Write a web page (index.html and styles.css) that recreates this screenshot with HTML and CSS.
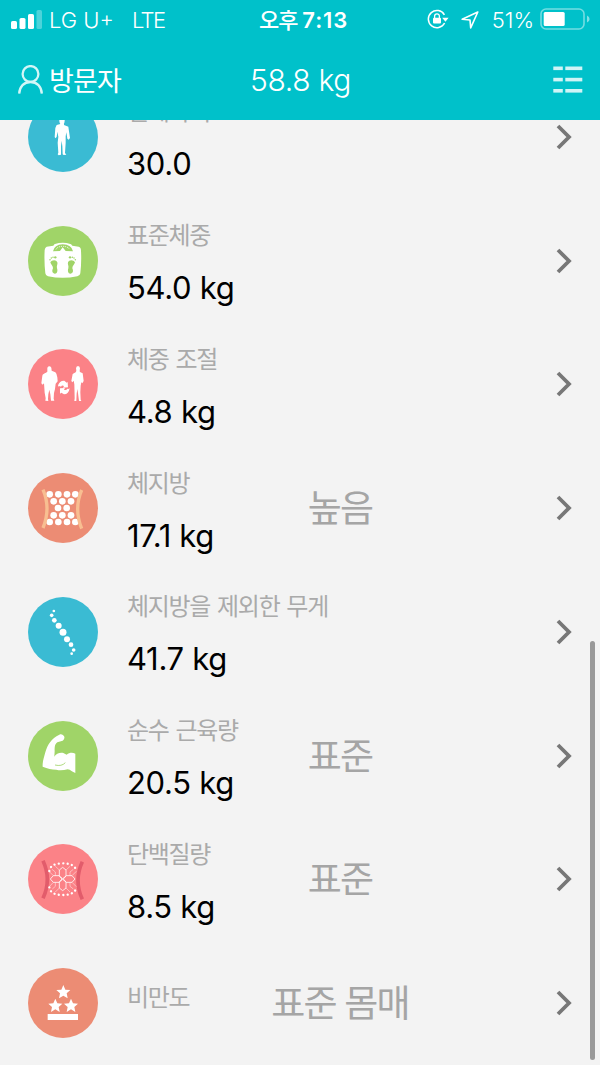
FILE: index.html
```
<!DOCTYPE html>
<html lang="ko">
<head>
    <meta charset="UTF-8">
    <meta name="viewport" content="width=device-width, initial-scale=1.0">
    <title>58.8 kg</title>
    <link rel="stylesheet" href="styles.css">
</head>
<body>

<div class="screen">

    <header class="header">
        <!-- Phone status bar -->
        <div class="status-bar">
            <div class="status-left">
                <svg class="signal" viewBox="0 0 32 20" width="32" height="20">
                    <rect x="0" y="12" width="6" height="8" rx="1.6"/>
                    <rect x="8.5" y="9" width="6" height="11" rx="1.6"/>
                    <rect x="17" y="5" width="6" height="15" rx="1.6"/>
                    <rect x="25.5" y="1" width="5.5" height="19" rx="1.6" opacity="0.3"/>
                </svg>
                <span class="carrier">LG U+</span>
                <span class="network">LTE</span>
            </div>
            <div class="time">오후 <span>7:13</span></div>
            <div class="status-right">
                <svg class="lock" viewBox="0 0 22 20" width="22" height="20" fill="none" stroke="#fff" stroke-width="1.5">
                    <path d="M17.4 5.8A8.6 8.6 0 1 0 17.6 14"/>
                    <path d="M15.2 8.7h6.4l-3.2 4z" fill="#fff" stroke="none"/>
                    <path d="M7.6 9V7.2a2.4 2.4 0 0 1 4.8 0V9" stroke-width="1.3"/>
                    <rect x="6" y="8.8" width="8" height="5.7" rx="1" fill="#fff" stroke="none"/>
                </svg>
                <svg class="location" viewBox="0 0 18 18" width="18" height="18" fill="none" stroke="#fff" stroke-width="1.6" stroke-linejoin="round">
                    <path d="M16.8 1L1.2 8.3l7.8.7.7 7.9z"/>
                </svg>
                <span class="percent">51%</span>
                <svg class="battery" viewBox="0 0 50 22" width="50" height="22">
                    <rect x="1" y="1" width="43" height="20" rx="5" fill="none" stroke="#fff" stroke-width="1.6" opacity="0.45"/>
                    <rect x="3.7" y="4" width="21" height="14" rx="1.5" fill="#fff"/>
                    <path d="M47 7.4q2.6 1 2.6 3.6t-2.6 3.6z" fill="#fff" opacity="0.5"/>
                </svg>
            </div>
        </div>

        <!-- Navigation -->
        <div class="nav-bar">
            <div class="user">
                <svg viewBox="0 0 26 29" width="26" height="29" fill="none" stroke="#d3f6f7" stroke-width="2.3">
                    <circle cx="12.5" cy="9" r="7.9"/>
                    <path d="M1.2 28.6C1.5 21.5 6 17 12.500 17s11 4.500 11.300 11.600"/>
                </svg>
                <span>방문자</span>
            </div>
            <h1>58.8 kg</h1>
            <svg class="menu" viewBox="0 0 30 28" width="30" height="28" fill="#d0f4f6">
                <rect x="0.3" y="0.5" width="9.5" height="3.6"/>
                <rect x="12.3" y="0.5" width="17" height="3.6"/>
                <rect x="0.3" y="11.8" width="9.5" height="3.6"/>
                <rect x="12.3" y="11.8" width="17" height="3.6"/>
                <rect x="0.3" y="23" width="9.5" height="3.6"/>
                <rect x="12.3" y="23" width="17" height="3.6"/>
            </svg>
        </div>
    </header>

    <!-- Measurements -->
    <main class="list-viewport">
        <ul class="list">
            <li class="row">
                <svg class="icon blue" viewBox="24 -40 210 210">
                    <ellipse cx="126" cy="16" rx="8" ry="11"/>
                    <path d="M121 24h11v5l13 5 5 34-4 5-4-3-3-19-2 12v20l-2 30 4 5-8 1-3-2-1-24-2-17-2 17v25l-7 2-3-3 2-5-2-30 2-18-3-15-2 16-4 4-2-4 2-27 4-9 11-3z"/>
                </svg>
                <div class="info"><p class="label">신체나이</p><p class="value">30.0</p></div>
                <p class="grade"></p>
                <svg class="arrow" viewBox="0 0 18 28"><path d="M3 3l11 11L3 25"/></svg>
            </li>
            <li class="row">
                <svg class="icon green" viewBox="24 32 210 210">
                    <path d="M80 94l20-3c2-2 2-4 5-5q23-8 46 0c4 1 4 4 6 5l19 3q7 2 7 12 2 35-2 68-1 8-9 9-44 9-88 0-7-1-8-9-4-35-2-70 1-8 6-10z"/>
                    <g fill="#a0d468">
                        <path d="M99 108q4-20 29-21 27 1 31 21l-22-1-9-11-8 11z"/>
                        <path d="M91 141c4-8 18-9 21 0 2 7-3 10-1 18 3 9 0 16-6 16-8 0-10-8-6-16 1-7-7-11-8-18z"/>
                        <path d="M165 141c-4-8-18-9-21 0-2 7 3 10 1 18-3 9 0 16 6 16 8 0 10-8 6-16-1-7 7-11 8-18z"/>
                        <circle cx="90" cy="133" r="2.3"/><circle cx="94" cy="128" r="2.3"/><circle cx="99" cy="126" r="2.3"/><circle cx="106" cy="126" r="3.5"/>
                        <circle cx="166" cy="133" r="2.3"/><circle cx="162" cy="128" r="2.3"/><circle cx="157" cy="126" r="2.3"/><circle cx="150" cy="126" r="3.5"/>
                    </g>
                    <path d="M108 102q5-9 20-9t21 9" fill="none" stroke="#fff" stroke-width="3" stroke-dasharray="3 3"/>
                </svg>
                <div class="info"><p class="label">표준체중</p><p class="value">54.0 kg</p></div>
                <p class="grade"></p>
                <svg class="arrow" viewBox="0 0 18 28"><path d="M3 3l11 11L3 25"/></svg>
            </li>
            <li class="row">
                <svg class="icon pink" viewBox="24 28 210 210">
                    <path d="M82 84q6-8 12 0l1 9 11 5c4 3 4 8 6 15l1 12-6 7-2 16-3 12-1 17 2 6h-10l-2-19-3-14-3 14-1 14 1 6-9-1 1-7-3-17-2-28-4 4-4-4 3-23c1-6 6-6 11-9l4-3z"/>
                    <ellipse cx="174" cy="87" rx="6" ry="8"/>
                    <path d="M170 92h8l2 5 8 4 3 23-4 7-3-3-2 10-1 20 1 22 2 4h-7l-3-23-2-13-2 14-1 22h-6l1-8-1-42-2-11-4 5-3-4 4-21 9-5z"/>
                    <path d="M114 137q5-15 19-14l7 6 3-2 1 16-15 1 3-5q-6-4-9 2l-4-2-3 2z"/>
                    <path d="M149 146q-3 18-17 18l-8-5-4 3v-16l15-1-3 5q7 3 10-3l3 1z"/>
                </svg>
                <div class="info"><p class="label">체중 조절</p><p class="value">4.8 kg</p></div>
                <p class="grade"></p>
                <svg class="arrow" viewBox="0 0 18 28"><path d="M3 3l11 11L3 25"/></svg>
            </li>
            <li class="row">
                <svg class="icon orange" viewBox="24 24 210 210">
                    <circle cx="89" cy="88" r="10"/><circle cx="115" cy="88" r="10"/><circle cx="141" cy="88" r="10"/><circle cx="166" cy="88" r="10"/>
                    <circle cx="101" cy="109" r="10"/><circle cx="127" cy="109" r="10"/><circle cx="153" cy="109" r="10"/>
                    <circle cx="114" cy="129" r="10"/><circle cx="140" cy="129" r="10"/>
                    <circle cx="101" cy="151" r="10"/><circle cx="127" cy="151" r="10"/><circle cx="153" cy="151" r="10"/>
                    <circle cx="89" cy="171" r="10"/><circle cx="115" cy="171" r="10"/><circle cx="141" cy="171" r="10"/><circle cx="166" cy="171" r="10"/>
                    <path d="M69 74q24 56 0 115M185 75q-24 56 0 116" fill="none" stroke="#f8be91" stroke-width="10"/>
                </svg>
                <div class="info"><p class="label">체지방</p><p class="value">17.1 kg</p></div>
                <p class="grade">높음</p>
                <svg class="arrow" viewBox="0 0 18 28"><path d="M3 3l11 11L3 25"/></svg>
            </li>
            <li class="row">
                <svg class="icon blue" viewBox="24 21 210 210">
                    <circle cx="101.5" cy="63" r="4"/>
                    <circle cx="95" cy="76" r="5.5"/>
                    <circle cx="103" cy="91" r="7"/>
                    <circle cx="116" cy="107" r="9"/>
                    <circle cx="129" cy="127" r="10.5"/>
                    <circle cx="141" cy="148" r="9"/>
                    <circle cx="153" cy="164" r="7"/>
                    <circle cx="161" cy="180" r="5.5"/>
                    <circle cx="155" cy="191" r="4"/>
                </svg>
                <div class="info"><p class="label">체지방을 제외한 무게</p><p class="value">41.7 kg</p></div>
                <p class="grade"></p>
                <svg class="arrow" viewBox="0 0 18 28"><path d="M3 3l11 11L3 25"/></svg>
            </li>
            <li class="row">
                <svg class="icon green" viewBox="24 26 210 210">
                    <path d="M118 67c6-3 12 0 15 6 1 5-1 8-5 12l-16 5c-8 6-8 14-8 26l-1 17c5-9 16-13 27-11l10 5c8-6 17-7 26-3v58c-9-2-14-10-23-11-11 2-22 5-34 1-14 0-26-3-41-9-1-15 4-28 8-43 6-22 18-42 42-53z"/>
                    <path d="M105 158q20 5 31-7" fill="none" stroke="#a0d468" stroke-width="2.5"/>
                </svg>
                <div class="info"><p class="label">순수 근육량</p><p class="value">20.5 kg</p></div>
                <p class="grade">표준</p>
                <svg class="arrow" viewBox="0 0 18 28"><path d="M3 3l11 11L3 25"/></svg>
            </li>
            <li class="row">
                <svg class="icon pink" viewBox="24 28 210 210">
                    <path d="M69 78q26 56 0 113M187 81q-26 56 0 113" fill="none" stroke="#e25c6b" stroke-width="11"/>
                    <path d="M88 109Q91 86 128 86T169 109M88 158Q91 181 128 181T169 158" fill="none" stroke="#fff" stroke-width="7" stroke-linecap="round" stroke-dasharray="0.1 13"/>
                    <g fill="none" stroke="#fff" stroke-width="2.4">
                        <path d="M128 98l10 8v18l-10 8-10-8v-18zM128 134l10 8v18l-10 8-10-8v-18zM126 133l-9 10h-17l-9-10 9-10h17zM130 133l9 10h17l9-10-9-10h-17z"/>
                    </g>
                    <path d="M118 106l-12-11M138 106l12-11M118 160l-12 12M138 160l12 12M100 123l-13-13M156 123l13-13M100 143l-12 13M156 143l13 13M106 123v-11l-10-8M150 123v-11l10-8M106 143v12l-9 8M150 143v12l10 8" fill="none" stroke="#fff" stroke-width="2" opacity="0.7"/>
                </svg>
                <div class="info"><p class="label">단백질량</p><p class="value">8.5 kg</p></div>
                <p class="grade">표준</p>
                <svg class="arrow" viewBox="0 0 18 28"><path d="M3 3l11 11L3 25"/></svg>
            </li>
            <li class="row">
                <svg class="icon orange" viewBox="24 24 210 210">
                    <defs><path id="star" d="M0-22L6-8 21-7 10 3 13 18 0 10-13 18-10 3-21-7-6-8z"/></defs>
                    <use href="#star" x="130" y="97"/>
                    <use href="#star" x="106" y="138"/>
                    <use href="#star" x="153" y="138"/>
                    <rect x="83" y="162" width="91" height="18"/>
                </svg>
                <div class="info label-only"><p class="label">비만도</p></div>
                <p class="grade">표준 몸매</p>
                <svg class="arrow" viewBox="0 0 18 28"><path d="M3 3l11 11L3 25"/></svg>
            </li>
        </ul>
    </main>

    <div class="scrollbar"></div>
</div>

</body>
</html>
```
FILE: styles.css
```
/* Basic Reset */
* {
    margin: 0;
    padding: 0;
    box-sizing: border-box;
}

body {
    font-family: Inter, "Noto Sans CJK KR", sans-serif;
    background-color: #f3f3f3;
}

.screen {
    position: relative;
    display: flex;
    flex-direction: column;
    width: 600px;
    height: 1065px;
    overflow: hidden;
}

/* Header */
.header {
    flex: none;
    height: 120px;
    background-color: #00c1ca;
    color: white;
}

.status-bar {
    display: grid;
    grid-template-columns: 1fr 100px 1fr;
    align-items: center;
    height: 40px;
    padding: 0 11px;
    line-height: 40px;
    white-space: nowrap;
}

.status-left,
.status-right {
    display: flex;
    align-items: center;
}

.status-right {
    justify-content: flex-end;
}

.signal {
    fill: white;
    margin-right: 6px;
    margin-top: -3px;
}

.carrier {
    width: 83px;
    font-size: 22px;
    font-weight: 300;
}

.network {
    font-size: 22px;
    font-weight: 300;
    letter-spacing: -1.7px;
}

.time {
    padding-left: 9px;
    font-size: 22px;
    font-weight: 500;
    letter-spacing: -1px;
}

.time span {
    font-weight: 600;
    letter-spacing: 0.9px;
}

.lock {
    margin-right: 12px;
    margin-top: -2px;
}

.location {
    margin-right: 13px;
    margin-top: -1px;
}

.percent {
    font-size: 22px;
    font-weight: 300;
    margin-right: 6px;
}

.battery {
    margin-right: -1px;
    margin-top: -2px;
}

.nav-bar {
    display: grid;
    grid-template-columns: 1fr 120px 1fr;
    align-items: center;
    height: 80px;
    padding: 0 17px 0 18px;
}

.user {
    display: flex;
    align-items: center;
    gap: 5px;
    font-size: 27px;
    line-height: 40px;
    letter-spacing: -0.9px;
}

.user svg {
    margin-top: -2px;
}

.user span {
    padding-top: 3px;
}

.nav-bar h1 {
    text-align: center;
    font-size: 30px;
    font-weight: 300;
    letter-spacing: -0.3px;
    white-space: nowrap;
}

.menu {
    justify-self: end;
}

/* Measurement List */
.list-viewport {
    flex: 1;
    min-height: 0;
    overflow: hidden;
}

.list {
    list-style: none;
    margin-top: -45.2px;
}

.row {
    display: grid;
    grid-template-columns: 70px 166px 152px 1fr;
    align-items: center;
    height: 123.8px;
    padding: 0 27px 0 28px;
}

.icon {
    width: 70px;
    height: 70px;
    border-radius: 50%;
    fill: white;
}

.blue {
    background-color: #3abbd3;
}

.green {
    background-color: #a0d468;
}

.pink {
    background-color: #fb8287;
}

.orange {
    background-color: #ec8c74;
}

.info {
    padding: 5px 0 0 29px;
    white-space: nowrap;
}

.info.label-only {
    padding: 0 0 11px 29px;
}

.label {
    font-size: 24px;
    line-height: 36px;
    letter-spacing: -1.3px;
    word-spacing: 1.5px;
    color: #aaa;
}

.value {
    margin-top: 14px;
    font-size: 31px;
    line-height: 40px;
    letter-spacing: -0.3px;
    color: #000;
}

.grade {
    padding-top: 2px;
    text-align: center;
    font-size: 37px;
    line-height: 50px;
    letter-spacing: -1.8px;
    white-space: nowrap;
    color: #a5a5a5;
}

.arrow {
    justify-self: end;
    width: 18px;
    height: 28px;
    fill: none;
    stroke: #777;
    stroke-width: 3.8;
}

/* Scroll indicator over the list */
.scrollbar {
    position: absolute;
    top: 641px;
    right: 5px;
    width: 5px;
    height: 419px;
    border-radius: 3px;
    background-color: #999;
}
```
